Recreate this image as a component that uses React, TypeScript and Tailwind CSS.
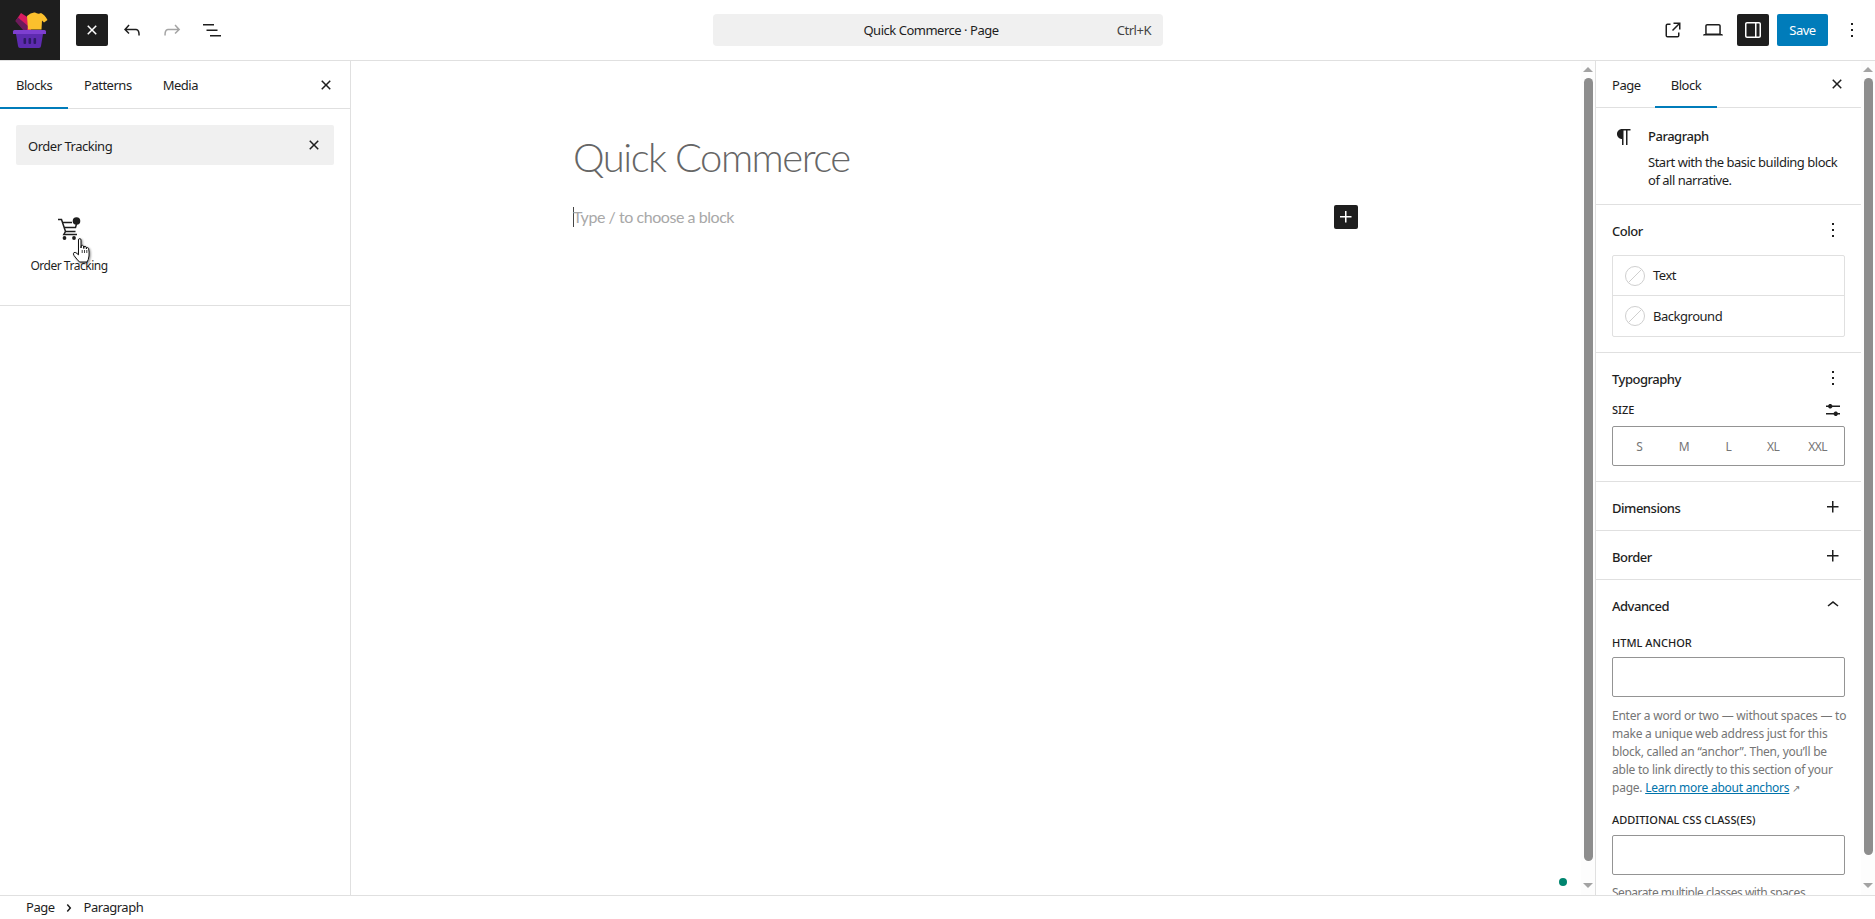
const UI = "font-['Noto_Sans','Open_Sans',sans-serif] tracking-[-0.03em]";

function WpIcon({ d, size = 24, className = "" }: { d: string | string[]; size?: number; className?: string }) {
  const paths = Array.isArray(d) ? d : [d];
  return (
    <svg viewBox="0 0 24 24" width={size} height={size} className={`fill-current shrink-0 ${className}`}>
      {paths.map((p) => (
        <path key={p} d={p} />
      ))}
    </svg>
  );
}

const icons = {
  closeSmall:
    "M12 13.06l3.712 3.713 1.061-1.06L13.061 12l3.712-3.712-1.06-1.06L12 10.938 8.288 7.227l-1.061 1.06L10.939 12l-3.712 3.712 1.06 1.061L12 13.061z",
  undo: "M18.3 11.7c-.6-.6-1.4-.9-2.3-.9H6.7l2.9-3.3-1.1-1-4.5 5L8.5 16l1-1-2.7-2.7H16c.5 0 .9.2 1.3.5 1 1 1 3.4 1 4.5v.3h1.5v-.2c0-1.5 0-4.3-1.5-5.7z",
  redo: "M15.6 6.5l-1.1 1 2.9 3.3H8c-.9 0-1.7.3-2.3.9-1.4 1.5-1.4 4.2-1.4 5.6v.2h1.5v-.3c0-1.1 0-3.5 1-4.5.3-.3.7-.5 1.3-.5h9.2L14.5 15l1.1 1.1 4.6-4.6-4.6-5z",
  list: "M3 6h11v1.5H3V6Zm3.5 5.5h11V13h-11v-1.5ZM21 17H10v1.5h11V17Z",
  external:
    "M19.5 4.5h-7V6h4.44l-5.97 5.97 1.06 1.06L18 7.06v4.44h1.5v-7Zm-13 1a2 2 0 0 0-2 2v10a2 2 0 0 0 2 2h10a2 2 0 0 0 2-2v-3H17v3a.5.5 0 0 1-.5.5h-10a.5.5 0 0 1-.5-.5v-10a.5.5 0 0 1 .5-.5h3V5.5h-3Z",
  laptop:
    "M20.5 16h-.7V8c0-1.1-.9-2-2-2H6.2c-1.1 0-2 .9-2 2v8h-.7c-.8 0-1.5.7-1.5 1.5h20c0-.8-.7-1.5-1.5-1.5zM5.7 8c0-.3.2-.5.5-.5h11.6c.3 0 .5.2.5.5v7.6H5.7V8z",
  drawer:
    "M18 4H6c-1.1 0-2 .9-2 2v12c0 1.1.9 2 2 2h12c1.1 0 2-.9 2-2V6c0-1.1-.9-2-2-2zm-4 14.5H6c-.3 0-.5-.2-.5-.5V6c0-.3.2-.5.5-.5h8v13zm4.5-.5c0 .3-.2.5-.5.5h-2.5v-13H18c.3 0 .5.2.5.5v12z",
  more: "M13 19h-2v-2h2v2zm0-6h-2v-2h2v2zm0-6h-2V5h2v2z",
  plus: "M11 12.5V17.5H12.5V12.5H17.5V11H12.5V6H11V11H6V12.5H11Z",
  chevronUp: "M6.5 12.4L12 8l5.5 4.4-.9 1.2L12 10l-4.5 3.6-1-1.2z",
  chevronRight: "M10.8622 8.04053L14.2805 12.0286L10.8622 16.0167L9.72327 15.0405L12.3049 12.0286L9.72327 9.01672L10.8622 8.04053Z",
  paragraph:
    "m9.99609 14v-.2251l.00391.0001v6.225h1.5v-14.5h2.5v14.5h1.5v-14.5h3v-1.5h-8.50391c-2.76142 0-5 2.23858-5 5 0 2.7614 2.23858 5 5 5z",
  sliders: [
    "m19 7.5h-7.628c-.3089-.87389-1.1423-1.5-2.122-1.5-.97966 0-1.81309.62611-2.12197 1.5h-2.12803v1.5h2.12803c.30888.87389 1.14231 1.5 2.12197 1.5.9797 0 1.8131-.62611 2.122-1.5h7.628z",
    "m19 15h-2.128c-.3089-.8739-1.1423-1.5-2.122-1.5s-1.8131.6261-2.122 1.5h-7.628v1.5h7.628c.3089.8739 1.1423 1.5 2.122 1.5s1.8131-.6261 2.122-1.5h2.128z",
  ],
};

function Logo() {
  return (
    <svg viewBox="0 0 60 60" width="60" height="60" className="shrink-0">
      <rect width="60" height="60" fill="#1e1e1e" />
      <path d="M15.5 21 L21 13 L32 20 L31 30 L24 30 Z" fill="#d81b60" />
      <path d="M15.5 21 L18 17.5 L28 26 L27 30 L23 30 Z" fill="#6a1b5c" />
      <path d="M27 16 Q31 12 35 12.5 Q38 14.5 41 13 Q45 15 47.5 20 L44 22.5 L42 20.5 L41.5 29.5 L28 29.5 Z" fill="#fbc02d" />
      <path d="M13 31.5 Q13 30 14.5 30 H44.5 Q46 30 46 31.5 V34 H13 Z" fill="#7e3fd0" />
      <path d="M16 34 H43 L41 46 Q40.8 48 39 48 H20 Q18.2 48 18 46 Z" fill="#5e2bb0" />
      <rect x="23.5" y="38" width="2.6" height="6" rx="1" fill="#2e1a66" />
      <rect x="28.5" y="38" width="2.6" height="6" rx="1" fill="#2e1a66" />
      <rect x="33.5" y="38" width="2.6" height="6" rx="1" fill="#2e1a66" />
    </svg>
  );
}

function CartIcon() {
  return (
    <svg viewBox="0 0 24 24" width="24" height="24" className="shrink-0 text-[#1e1e1e]">
      <path d="M1 2.5 H4.5 L8.5 14.5 H18.5" fill="none" stroke="currentColor" strokeWidth="1.5" />
      <path d="M5.5 5.5 H15 M7 10.5 H18.5 L19.5 7" fill="none" stroke="currentColor" strokeWidth="1.5" />
      <path d="M8.5 14.5 L6.8 17.5 H20" fill="none" stroke="currentColor" strokeWidth="1.5" />
      <circle cx="19.5" cy="4" r="3.8" fill="currentColor" />
      <circle cx="7.5" cy="21" r="1.9" fill="currentColor" />
      <circle cx="17" cy="21" r="1.9" fill="currentColor" />
    </svg>
  );
}

function HandCursor() {
  return (
    <svg viewBox="0 0 20 26" width="20" height="26" className="absolute left-[72px] top-[177px] drop-shadow-[1px_1px_1px_rgba(0,0,0,0.45)]">
      <path
        d="M6.5 2 Q6.5 0.6 7.8 0.6 Q9 0.6 9 2 V10 L9.3 7.6 Q10.6 6.8 11.5 8 L11.8 10.5 L12 8.6 Q13.2 7.8 14.2 9 L14.4 11 L14.6 9.8 Q15.8 9.2 16.6 10.3 Q17.4 14 17 18 Q16.5 22 15 24 H7.5 Q5 21.5 2 17.5 Q0.8 15.5 2 14.5 Q3.4 13.6 6.5 16.8 Z"
        fill="#fff"
        stroke="#111"
        strokeWidth="1"
      />
      <path d="M10.2 12 V15 M12.5 12 V15 M14.8 12 V15" stroke="#111" strokeWidth="0.8" />
    </svg>
  );
}

function Scrollbar({ thumbEnd }: { thumbEnd: string }) {
  return (
    <div className="flex flex-col items-center shrink-0 w-[14px] bg-[#fdfdfd]">
      <div className="mt-[6px] h-0 w-0 border-x-[5px] border-b-[5px] border-x-transparent border-b-[#a3a3a3]" />
      <div className={`mt-[6px] w-[9px] rounded-full bg-[#8d8d8d] ${thumbEnd}`} />
      <div className="mt-auto mb-[7px] h-0 w-0 border-x-[5px] border-t-[5px] border-x-transparent border-t-[#a3a3a3]" />
    </div>
  );
}

function Swatch() {
  return (
    <svg width="20" height="20" viewBox="0 0 20 20" className="shrink-0">
      <circle cx="10" cy="10" r="9.5" fill="#fff" stroke="#cfcfcf" />
      <path d="M3.5 16.5 L16.5 3.5" stroke="#cfcfcf" />
    </svg>
  );
}

function SectionHead({ title, icon }: { title: string; icon: string }) {
  return (
    <div className="flex items-center justify-between h-[50px]">
      <span className="pt-[3px] text-[13px] font-medium">{title}</span>
      <WpIcon d={icon} />
    </div>
  );
}

function CollapsedSection({ title }: { title: string }) {
  return (
    <div className="h-[49px] px-4 border-b border-[#e0e0e0] overflow-hidden">
      <SectionHead title={title} icon={icons.plus} />
    </div>
  );
}

export default function App() {
  return (
    <div className={`flex flex-col h-[919px] w-[1875px] overflow-hidden bg-white text-[#1e1e1e] ${UI}`}>
      {/* Header */}
      <header className="relative flex items-center h-[61px] shrink-0 border-b border-[#e0e0e0]">
        <Logo />
        <div className="flex items-center ml-4">
          <button className="flex items-center justify-center w-8 h-8 rounded-[2px] bg-[#1e1e1e] text-white">
            <WpIcon d={icons.closeSmall} />
          </button>
          <div className="flex items-center gap-4 ml-3">
            <WpIcon d={icons.undo} />
            <WpIcon d={icons.redo} className="text-[#a5a5a5]" />
            <WpIcon d={icons.list} />
          </div>
        </div>
        <div className="relative flex items-center justify-center w-[450px] h-8 ml-[489px] pt-[2px] pr-[14px] rounded-[4px] bg-[#f0f0f0] text-[13px]">
          Quick Commerce · Page
          <span className="absolute right-3 top-[7px] text-[13px] text-[#444]">Ctrl+K</span>
        </div>
        <div className="flex items-center ml-auto pr-[11px]">
          <WpIcon d={icons.external} />
          <WpIcon d={icons.laptop} className="ml-4" />
          <button className="flex items-center justify-center w-8 h-8 ml-3 rounded-[2px] bg-[#1e1e1e] text-white">
            <WpIcon d={icons.drawer} />
          </button>
          <button className="w-[51px] h-8 ml-2 pt-[2px] rounded-[2px] bg-[#007cba] text-white text-[13px]">Save</button>
          <WpIcon d={icons.more} className="ml-3" />
        </div>
      </header>

      <div className="flex flex-1 min-h-0">
        {/* Inserter */}
        <aside className="relative flex flex-col w-[351px] shrink-0 border-r border-[#e0e0e0]">
          <div className="flex items-stretch h-12 shrink-0 border-b border-[#e0e0e0] text-[13px]">
            <span className="relative flex items-center px-4 pt-[3px] w-[68px]">
              Blocks
              <span className="absolute left-0 right-0 -bottom-px h-[2px] bg-[#007cba]" />
            </span>
            <span className="flex items-center ml-4 pt-[3px]">Patterns</span>
            <span className="flex items-center ml-[31px] pt-[3px]">Media</span>
            <span className="flex items-center ml-auto mr-[12px]">
              <WpIcon d={icons.closeSmall} />
            </span>
          </div>
          <div className="flex items-center justify-between h-10 mx-4 mt-4 pl-3 pr-2 rounded-[2px] bg-[#f0f0f0] text-[13px]">
            <span className="pt-[4px]">Order Tracking</span>
            <WpIcon d={icons.closeSmall} />
          </div>
          <div className="flex flex-col items-center w-[138px] h-[140px] pt-[52px]">
            <CartIcon />
            <span className="mt-[16px] text-[12px]">Order Tracking</span>
          </div>
          <div className="border-b border-[#e0e0e0]" />
          <HandCursor />
        </aside>

        {/* Canvas */}
        <main className="relative flex-1 min-w-0 pl-[222px] pt-[68px]">
          <h1 className="font-['Lato',sans-serif] font-light text-[40px] tracking-[-1.5px] leading-[56px] text-[#666]">Quick Commerce</h1>
          <div className="flex items-center mt-[20px] h-6 w-[785px]">
            <span className="h-5 w-px bg-[#444]" />
            <span className="-ml-[1px] font-['Lato',sans-serif] text-[16px] tracking-[-0.45px] text-[#a8a8a8]">Type / to choose a block</span>
            <button className="flex items-center justify-center w-6 h-6 ml-auto rounded-[2px] bg-[#1e1e1e] text-white">
              <WpIcon d={icons.plus} />
            </button>
          </div>
          <span className="absolute right-[14px] bottom-[9px] w-2 h-2 rounded-full bg-[#00856f]" />
        </main>
        <Scrollbar thumbEnd="h-[783px]" />

        {/* Settings sidebar */}
        <aside className="w-[266px] shrink-0 border-l border-[#e0e0e0] overflow-hidden">
          <div className="flex items-stretch h-[47px] border-b border-[#e0e0e0] text-[13px]">
            <span className="flex items-center pl-4 pt-[3px] w-[59px]">Page</span>
            <span className="relative flex items-center justify-center pt-[3px] w-[62px]">
              Block
              <span className="absolute left-0 right-0 -bottom-px h-[2px] bg-[#007cba]" />
            </span>
            <span className="flex items-center ml-auto mr-[12px]">
              <WpIcon d={icons.closeSmall} />
            </span>
          </div>
          <div className="flex gap-3 h-[97px] pt-[19px] pl-[16px] border-b border-[#e0e0e0]">
            <WpIcon d={icons.paragraph} className="-mt-[2px]" />
            <div className="text-[13px] leading-[18px]">
              <div className="font-medium mb-[8px]">Paragraph</div>
              <div className="w-[200px]">Start with the basic building block of all narrative.</div>
            </div>
          </div>
          <div className="h-[148px] px-4 border-b border-[#e0e0e0]">
            <SectionHead title="Color" icon={icons.more} />
            <div className="border border-[#e0e0e0] rounded-[2px] text-[13px]">
              <div className="flex items-center gap-2 h-[40px] pl-3 border-b border-[#e0e0e0]">
                <Swatch />
                Text
              </div>
              <div className="flex items-center gap-2 h-[40px] pl-3">
                <Swatch />
                <span className="pt-[2px]">Background</span>
              </div>
            </div>
          </div>
          <div className="h-[129px] px-4 border-b border-[#e0e0e0]">
            <SectionHead title="Typography" icon={icons.more} />
            <div className="flex items-center justify-between h-[18px] -mt-[2px]">
              <span className="text-[11px] font-medium tracking-normal">SIZE</span>
              <WpIcon d={icons.sliders} />
            </div>
            <div className="grid grid-cols-5 items-center h-10 mt-[7px] px-[4px] pt-[2px] border border-[#949494] rounded-[2px] text-[12px] text-[#757575] text-center">
              <span>S</span>
              <span>M</span>
              <span>L</span>
              <span>XL</span>
              <span>XXL</span>
            </div>
          </div>
          <CollapsedSection title="Dimensions" />
          <CollapsedSection title="Border" />
          <div className="px-4">
            <SectionHead title="Advanced" icon={icons.chevronUp} />
            <div className="text-[11px] font-medium tracking-normal leading-4 mt-[5px]">HTML ANCHOR</div>
            <div className="h-10 mt-[6px] border border-[#949494] rounded-[2px]" />
            <p className="mt-[10px] w-[238px] text-[12px] tracking-[-0.02em] leading-[18px] text-[#757575]">
              Enter a word or two — without spaces — to make a unique web address just for this block, called an “anchor”. Then, you’ll be able to link directly to this section of your page.{" "}
              <span className="text-[#0073aa] underline">Learn more about anchors</span> <span className="text-[10px]">↗</span>
            </p>
            <div className="text-[11px] font-medium tracking-normal leading-4 mt-[15px]">ADDITIONAL CSS CLASS(ES)</div>
            <div className="h-10 mt-[7px] border border-[#949494] rounded-[2px]" />
            <p className="mt-[9px] text-[12px] leading-[18px] text-[#757575] whitespace-nowrap">Separate multiple classes with spaces.</p>
          </div>
        </aside>
        <Scrollbar thumbEnd="h-[777px]" />
      </div>

      {/* Breadcrumb */}
      <footer className="flex items-center h-[24px] shrink-0 pl-[26px] border-t border-[#e0e0e0] bg-white text-[13px]">
        Page
        <WpIcon d={icons.chevronRight} size={24} className="ml-[2px] mr-[3px]" />
        Paragraph
      </footer>
    </div>
  );
}
